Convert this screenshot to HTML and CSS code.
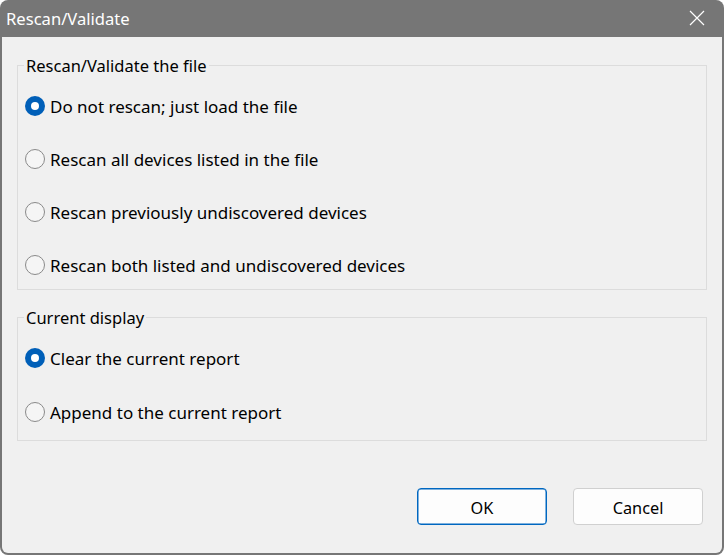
FILE: index.html
```html
<!DOCTYPE html>
<html>
<head>
<meta charset="utf-8">
<link rel="stylesheet" href="styles.css">
</head>
<body>
<div class="window">
  <div class="titlebar">
    <span class="title">Rescan/Validate</span>
    <svg class="close" width="16" height="16" viewBox="0 0 16 16"><path d="M1 1L15 15M15 1L1 15" stroke="#fff" stroke-width="1.2" fill="none"/></svg>
  </div>
  <div class="panel">
    <fieldset class="group g1">
      <legend><span class="ltxt">Rescan/Validate the file</span></legend>
      <div class="rows">
        <label class="row"><span class="radio on"></span><span class="txt">Do not rescan; just load the file</span></label>
        <label class="row"><span class="radio"></span><span class="txt">Rescan all devices listed in the file</span></label>
        <label class="row"><span class="radio"></span><span class="txt">Rescan previously undiscovered devices</span></label>
        <label class="row"><span class="radio"></span><span class="txt">Rescan both listed and undiscovered devices</span></label>
      </div>
    </fieldset>
    <fieldset class="group g2">
      <legend><span class="ltxt">Current display</span></legend>
      <div class="rows">
        <label class="row"><span class="radio on"></span><span class="txt">Clear the current report</span></label>
        <label class="row"><span class="radio"></span><span class="txt">Append to the current report</span></label>
      </div>
    </fieldset>
    <div class="buttons">
      <button class="btn default">OK</button>
      <button class="btn">Cancel</button>
    </div>
  </div>
</div>
</body>
</html>
```
FILE: styles.css
```css
html, body {
  margin: 0;
  padding: 0;
  background: #ffffff;
}
body {
  font-family: "Noto Sans", "Open Sans", sans-serif;
  font-size: 17px;
  color: #000;
}
.window {
  width: 724px;
  height: 555px;
  box-sizing: border-box;
  background: #767676;
  border-radius: 8px;
  padding: 0 2px 2px 2px;
  display: flex;
  flex-direction: column;
}
.titlebar {
  height: 37px;
  flex: none;
  display: flex;
  align-items: center;
  justify-content: space-between;
  padding: 0 17px 0 4px;
}
.title {
  color: #fff;
  font-size: 16.6px;
  margin-top: -1px;
}
.close {
  display: block;
  margin-top: -1px;
}
.panel {
  flex: 1;
  background: #f0f0f0;
  border-radius: 0 0 6px 6px;
  padding: 17px 15px 28px 15px;
  display: flex;
  flex-direction: column;
}
.group {
  margin: 0;
  border: 1px solid #dcdcdc;
  padding: 0 7px;
  min-width: 0;
}
.group legend {
  padding: 0 2px;
  margin-left: -1px;
  height: 22px;
  font-size: 16.5px;
}
.ltxt {
  display: block;
  line-height: 22px;
  padding-top: 1px;
  height: 21px;
  overflow: visible;
}
.g1 .rows {
  padding: 18px 0 12px 0;
  gap: 29px;
}
.g2 {
  margin-top: 16px;
}
.g2 .rows {
  padding: 18px 0 16px 0;
  gap: 30px;
}
.rows {
  display: flex;
  flex-direction: column;
}
.row {
  display: flex;
  align-items: center;
  height: 24px;
}
.txt {
  line-height: 24px;
  padding-top: 2px;
}
.radio {
  width: 20px;
  height: 20px;
  box-sizing: border-box;
  border-radius: 50%;
  border: 1px solid #8a8a8a;
  background: #f5f5f5;
  margin-right: 5px;
  flex: none;
  position: relative;
}
.radio.on {
  border: none;
  background: #005fb8;
}
.radio.on::after {
  content: "";
  position: absolute;
  left: 6px;
  top: 6px;
  width: 8px;
  height: 8px;
  border-radius: 50%;
  background: #fff;
}
.buttons {
  margin-top: auto;
  display: flex;
  justify-content: flex-end;
  gap: 26px;
  padding-right: 4px;
}
.btn {
  width: 130px;
  height: 37px;
  box-sizing: border-box;
  background: #fdfdfd;
  border: 1px solid #d0d0d0;
  border-radius: 4px;
  font-family: inherit;
  font-size: 16.3px;
  color: #000;
  padding: 2px 0 0 0;
}
.btn.default {
  border: 1px solid #0067c0;
  box-shadow: inset 0 0 0 0.5px #0067c0;
}
```
